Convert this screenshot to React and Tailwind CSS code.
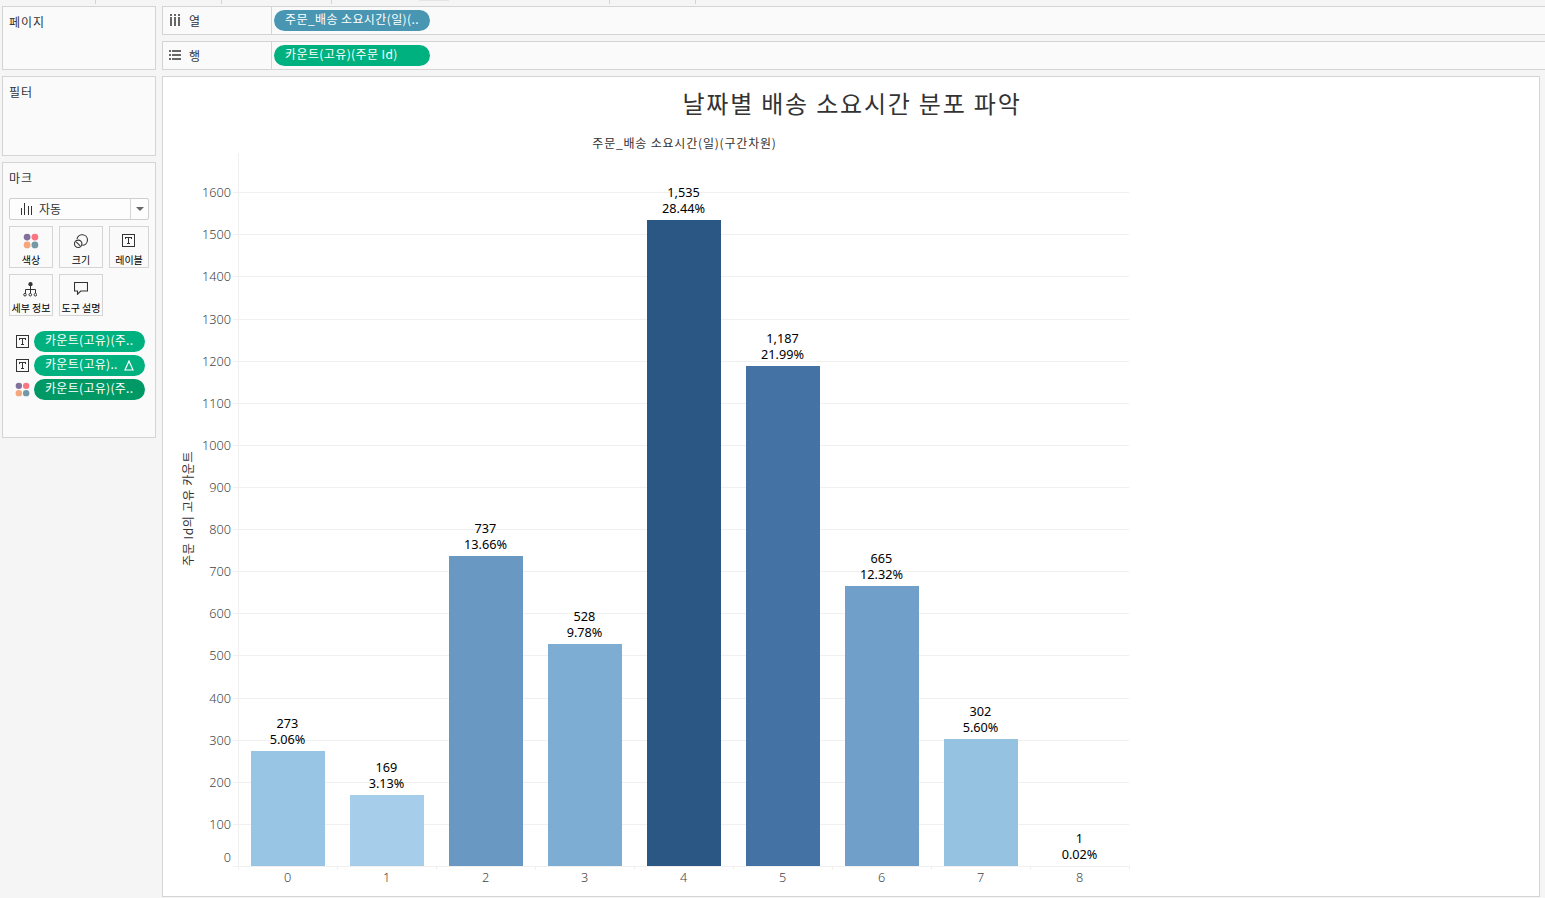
import React from "react";

const BARS = [
  { bin: 0, count: "273", pct: "5.06%", height: 115, color: "#99c5e4" },
  { bin: 1, count: "169", pct: "3.13%", height: 71, color: "#a6cdea" },
  { bin: 2, count: "737", pct: "13.66%", height: 310, color: "#6999c3" },
  { bin: 3, count: "528", pct: "9.78%", height: 222, color: "#7dadd3" },
  { bin: 4, count: "1,535", pct: "28.44%", height: 646, color: "#2a5783" },
  { bin: 5, count: "1,187", pct: "21.99%", height: 500, color: "#4472a4" },
  { bin: 6, count: "665", pct: "12.32%", height: 280, color: "#70a0c9" },
  { bin: 7, count: "302", pct: "5.60%", height: 127, color: "#95c2e1" },
  { bin: 8, count: "1", pct: "0.02%", height: 0, color: "#b9ddf1" },
];

const TICKS = Array.from({ length: 16 }, (_, i) => 1600 - i * 100);

// Whole-pixel distance of the i-th tick below the top one.
const tickOffset = (i) => 42 * i + Math.floor((i + 6) / 9);

function ColorDots({ size = 16 }) {
  return (
    <svg width={size} height={size} viewBox="0 0 16 16">
      <circle cx="4.1" cy="4.1" r="3.4" fill="#82719a" />
      <circle cx="11.9" cy="4.1" r="3.4" fill="#fb7481" />
      <circle cx="4.1" cy="11.9" r="3.4" fill="#f4a67c" />
      <circle cx="11.9" cy="11.9" r="3.4" fill="#7398a6" />
    </svg>
  );
}

function LabelIcon({ className }) {
  return (
    <svg className={className} width="13" height="13" viewBox="0 0 13 13" fill="none" stroke="#333" shapeRendering="crispEdges">
      <rect x="0.5" y="0.5" width="12" height="12" />
      <path d="M3 3.5h7M3.5 3v2M9.5 3v2M6.5 3v7M5 9.5h3" />
    </svg>
  );
}

function SizeIcon() {
  return (
    <svg width="16" height="16" viewBox="0 0 16 16" fill="none" stroke="#333" strokeWidth="1.1">
      <path d="M4 5.9a5.3 5.3 0 1 1 5.3 6.4" />
      <circle cx="5.2" cy="10.8" r="3.7" />
      <path d="M3.2 8.8l4 4" />
    </svg>
  );
}

function DetailIcon() {
  return (
    <svg className="-ml-0.5" width="14" height="15" viewBox="0 0 14 15" fill="none" stroke="#333">
      <circle cx="7.5" cy="2.2" r="2.1" fill="#333" stroke="none" />
      <path d="M7.5 4v7M2.5 11V7.5h10V11" />
      <circle cx="2" cy="12.7" r="1.3" />
      <circle cx="7.3" cy="12.7" r="1.3" />
      <circle cx="12.4" cy="12.7" r="1.3" />
    </svg>
  );
}

function TooltipIcon() {
  return (
    <svg className="-mt-0.5" width="14" height="13" viewBox="0 0 14 13" fill="none" stroke="#333" strokeWidth="1.1">
      <path d="M0.5 0.5h13v8.5H6.8L3.5 12.2V9h-3z" />
    </svg>
  );
}

function ColumnsIcon() {
  return (
    <svg className="-mt-0.5" width="12" height="12" viewBox="0 0 12 12" fill="#666" shapeRendering="crispEdges">
      <path d="M1 0h2v2H1zM5 0h2v2H5zM9 0h2v2H9zM1 3h2v9H1zM5 3h2v9H5zM9 3h2v9H9z" />
    </svg>
  );
}

function RowsIcon() {
  return (
    <svg className="-mt-0.5" width="12" height="12" viewBox="0 0 12 12" fill="#666" shapeRendering="crispEdges">
      <path d="M0 1h2v2H0zM0 5h2v2H0zM0 9h2v2H0zM3 1h9v2H3zM3 5h9v2H3zM3 9h9v2H3z" />
    </svg>
  );
}

function Card({ title, className, children }) {
  return (
    <section className={`border border-[#d4d4d4] bg-[#fafafa] ${className}`}>
      <h2 className="ml-1.5 mt-[5px] h-5 text-[12px] leading-5 tracking-[0.9px]">{title}</h2>
      {children}
    </section>
  );
}

function MarkButton({ icon, label, className }) {
  return (
    <button className={`flex h-[42px] flex-col items-center border border-[#d4d4d4] ${className}`}>
      <span className="flex h-7 items-center justify-center">{icon}</span>
      <span className="-mt-px whitespace-nowrap text-[10px] leading-3 text-black">{label}</span>
    </button>
  );
}

function MarkPill({ icon, text, color, delta }) {
  return (
    <div className="flex h-[21px] items-center">
      <span className="flex w-[15px] justify-center">{icon}</span>
      <span
        className={`ml-1 flex h-[21px] w-[111px] items-center whitespace-nowrap rounded-full pl-[11px] text-[12px] leading-[19px] tracking-[0.3px] text-white ${color}`}
      >
        <span className="-mt-1">{text}</span>
        {delta && (
          <svg className="ml-1.5" width="10" height="11" viewBox="0 0 10 11" fill="none" stroke="white" strokeWidth="1.2">
            <path d="M5 1l4 9H1z" />
          </svg>
        )}
      </span>
    </div>
  );
}

function Shelf({ icon, title, pill, color }) {
  return (
    <div className="flex h-[29px] border border-r-0 border-[#d4d4d4] bg-[#fafafa]">
      <div className="flex w-[109px] items-center border-r border-[#d4d4d4] pl-1.5">
        {icon}
        <span className="ml-2 text-[12px] leading-5">{title}</span>
      </div>
      <div
        className={`ml-0.5 mt-[3px] h-[21px] w-[156px] whitespace-nowrap rounded-full pl-[11px] text-[12px] leading-[18px] tracking-[0.4px] text-white ${color}`}
      >
        {pill}
      </div>
    </div>
  );
}

function Chart() {
  return (
    <main className="h-[821px] w-[1378px] border border-[#d4d4d4] bg-white">
      <h1 className="mt-1.5 h-[41px] pl-0.5 text-center text-[24px] leading-10 tracking-[1.8px] text-[#333]">
        날짜별 배송 소요시간 분포 파악
      </h1>
      <div className="ml-[75px] h-[29px] w-[893px] pt-[9px] text-center text-[12px] leading-5 tracking-[0.8px] text-[#333]">
        주문_배송 소요시간(일)(구간차원)
      </div>
      <div className="flex">
        <div className="flex w-[35px] justify-end pr-[3px] pt-[296px]">
          <span className="h-[117px] rotate-180 whitespace-nowrap text-[12px] leading-[14px] tracking-[0.6px] text-[#333] [text-orientation:sideways] [writing-mode:vertical-rl]">
            주문 Id의 고유 카운트
          </span>
        </div>
        <div className="w-[33px] pt-[18px] text-right font-['Noto_Sans','Noto_Sans_CJK_KR',sans-serif] text-[12.7px] font-light leading-[42px] text-[#444]">
          {TICKS.map((t, i) => (
            <div
              key={t}
              className="flex items-end justify-end"
              style={{ height: i === 0 ? 42 : tickOffset(i) - tickOffset(i - 1) }}
            >
              {t}
            </div>
          ))}
          <div className="flex h-6 items-center justify-end">0</div>
        </div>
        <div className="relative ml-0.5 h-[740px] w-[897px] font-['Noto_Sans',sans-serif] text-[12.7px]">
          <svg className="absolute left-0 top-0" width="897" height="717" stroke="#f0f0f0" shapeRendering="crispEdges">
            {TICKS.map((t, i) => (
              <path key={t} d={`M0 ${39.5 + tickOffset(i)}h896`} />
            ))}
            <path d="M0 713.5h896M5.5 0v717" />
            {BARS.map((b, i) => (
              <path key={b.bin} d={`M${104.5 + i * 99} 713v4`} />
            ))}
          </svg>
          <div className="relative ml-[5px] flex h-[713px] items-end">
            {BARS.map((b) => (
              <div key={b.bin} className="flex w-[99px] flex-col items-center pl-px text-center leading-4 text-black">
                <span className="mr-px">{b.count}</span>
                <span className="mb-1 mr-px">{b.pct}</span>
                <div className="w-[74px]" style={{ height: b.height, backgroundColor: b.color }} />
              </div>
            ))}
          </div>
          <div className="ml-[5px] flex pt-[3px] font-light text-[#444]">
            {BARS.map((b) => (
              <span key={b.bin} className="w-[99px] text-center leading-4">
                {b.bin}
              </span>
            ))}
          </div>
        </div>
      </div>
    </main>
  );
}

export default function App() {
  return (
    <div className="h-[898px] w-[1545px] overflow-hidden bg-[#f5f5f5] font-['Noto_Sans_CJK_KR',sans-serif] text-[#333]">
      <div className="flex h-1.5 items-start">
        <span className="ml-[95px] h-1 w-px bg-[#d4d4d4]" />
        <span className="ml-[125px] h-1 w-px bg-[#d4d4d4]" />
        <span className="ml-[109px] h-1 w-px bg-[#d4d4d4]" />
        <span className="ml-[87px] h-px w-[30px] bg-[#e4e4e4]" />
        <span className="ml-40 h-1 w-px bg-[#d4d4d4]" />
        <span className="ml-[85px] h-1 w-px bg-[#d4d4d4]" />
      </div>
      <div className="flex">
        <aside className="ml-0.5 flex w-[154px] shrink-0 flex-col gap-1.5">
          <Card title="페이지" className="h-16" />
          <Card title="필터" className="h-20" />
          <Card title="마크" className="h-[276px]">
            <div className="ml-1.5 mt-[10px] flex h-[22px] w-[140px] items-center rounded-[2px] border border-[#cfcfcf] bg-[#fdfdfd]">
              <svg className="ml-[11px]" width="11" height="12" viewBox="0 0 11 12" stroke="#333" shapeRendering="crispEdges">
                <path d="M0.5 5v7M3.5 0v12M7 3v9M10.5 3v9" />
              </svg>
              <span className="ml-[7px] text-[12px] leading-5">자동</span>
              <span className="ml-auto flex h-full w-[18px] items-center justify-center border-l border-[#d4d4d4]">
                <svg width="8" height="4" viewBox="0 0 8 4" fill="#666">
                  <path d="M0 0h8L4 4z" />
                </svg>
              </span>
            </div>
            <div className="ml-1.5 mt-1.5 flex flex-wrap gap-1.5">
              <MarkButton className="w-11" label="색상" icon={<ColorDots />} />
              <MarkButton className="w-11" label="크기" icon={<SizeIcon />} />
              <MarkButton className="w-10" label="레이블" icon={<LabelIcon className="-mt-px mr-px" />} />
              <MarkButton className="w-11" label="세부 정보" icon={<DetailIcon />} />
              <MarkButton className="w-11" label="도구 설명" icon={<TooltipIcon />} />
            </div>
            <div className="ml-3 mt-[15px] flex flex-col gap-[3px]">
              <MarkPill icon={<LabelIcon />} text="카운트(고유)(주.." color="bg-[#00b180]" />
              <MarkPill icon={<LabelIcon />} text="카운트(고유).." color="bg-[#00b180]" delta />
              <MarkPill icon={<ColorDots size={15} />} text="카운트(고유)(주.." color="bg-[#009966]" />
            </div>
          </Card>
        </aside>
        <div className="ml-1.5 flex grow flex-col gap-1.5">
          <Shelf icon={<ColumnsIcon />} title="열" pill="주문_배송 소요시간(일)(.." color="bg-[#4996b2]" />
          <Shelf icon={<RowsIcon />} title="행" pill="카운트(고유)(주문 Id)" color="bg-[#00b180]" />
          <Chart />
        </div>
      </div>
    </div>
  );
}
